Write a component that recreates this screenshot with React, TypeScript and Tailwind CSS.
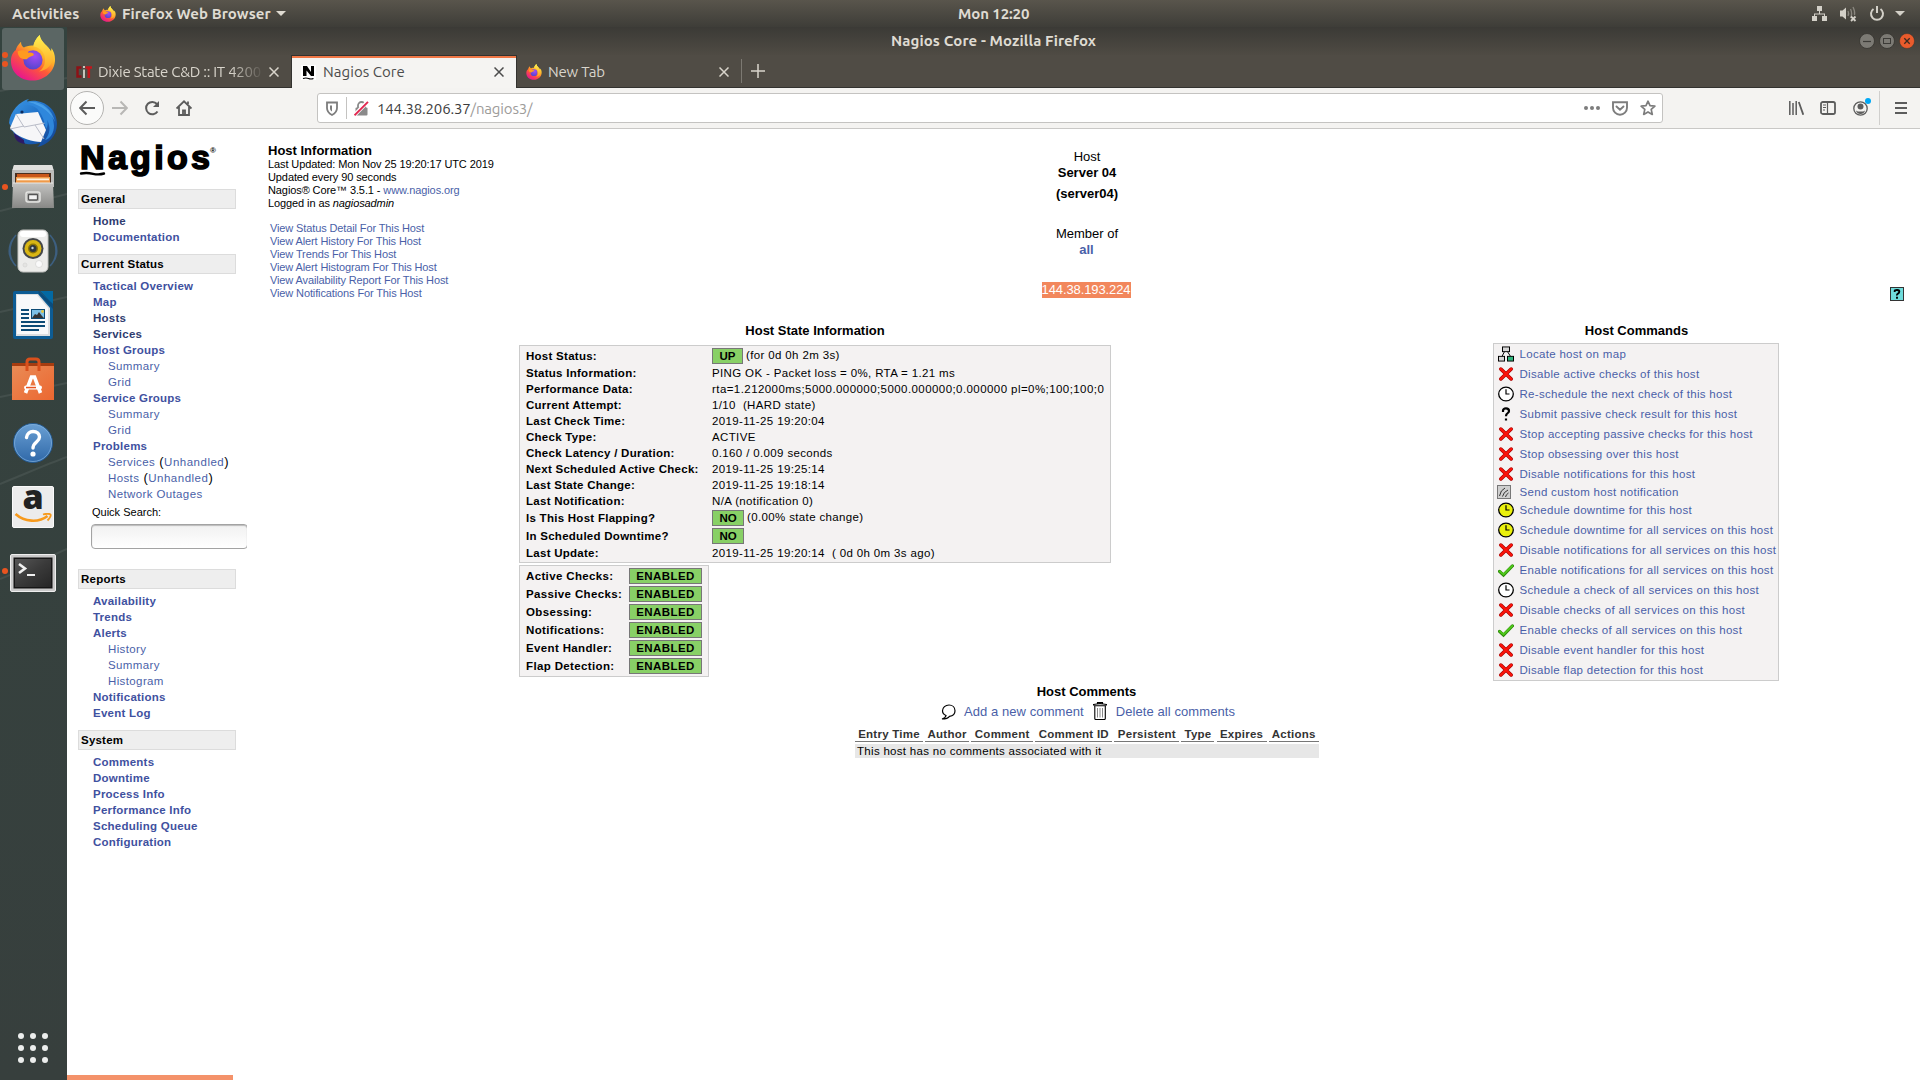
import React from "react";

const UI = "font-['Ubuntu','Noto_Sans',sans-serif]";

function FirefoxLogo({ size, id }: { size: number; id: string }) {
  return (
    <svg width={size} height={size} viewBox="0 0 48 48">
      <defs>
        <linearGradient id={id + "a"} x1="0.8" y1="0.1" x2="0.25" y2="0.95">
          <stop offset="0" stopColor="#fff14a" />
          <stop offset="0.35" stopColor="#ffb028" />
          <stop offset="0.6" stopColor="#ff5a36" />
          <stop offset="1" stopColor="#e8188c" />
        </linearGradient>
        <radialGradient id={id + "b"} cx="0.6" cy="0.3" r="0.8">
          <stop offset="0" stopColor="#a44bf5" />
          <stop offset="1" stopColor="#4a45c8" />
        </radialGradient>
        <linearGradient id={id + "c"} x1="0.6" y1="0" x2="0.6" y2="1">
          <stop offset="0" stopColor="#fff250" />
          <stop offset="1" stopColor="#ffa024" />
        </linearGradient>
      </defs>
      <path d="M31 0c-4 4-6 8-6.500 11-4-.5-8 .8-10 2-2-1-3-3-3-6-3 3-5 6-5.500 9C2.500 18 1 23 1 27c0 12 10 20.500 22.500 20.500S47 38 47 25.500c0-5-1.500-9-4-12 .3 1.500.2 3 0 4C40 11 32 8 31 0z" fill={`url(#${id}a)`} />
      <path d="M31 0c-4 4-6.500 8-6.500 12 8 1 13 8 12 16-.6 5-3 8-6 10 8-1 14-7 14.500-15 .2-3-.5-6-2-8.500.3 1.500.2 2.500 0 3.500C40 11 32 8 31 0z" fill={`url(#${id}c)`} />
      <circle cx="24" cy="26" r="10" fill={`url(#${id}b)`} />
      <path d="M8 17c4-2 9-1.500 11.500 1.500 3-.5 5 .5 5.500 2-2 2-6 2-7 4.500-2 1-4 0-7-1-2-2-3-4-3-7z" fill="#ff9a1f" />
    </svg>
  );
}

const dockIcons: { el: React.ReactNode; dots: number }[] = [
  { dots: 2, el: <FirefoxLogo size={46} id="ffd" /> },
  {
    dots: 0,
    el: (
      <svg width="50" height="50" viewBox="0 0 50 50">
        <defs>
          <linearGradient id="tb" x1="0" y1="0" x2="1" y2="1">
            <stop offset="0" stopColor="#3f9be8" />
            <stop offset="0.5" stopColor="#1d6cc4" />
            <stop offset="1" stopColor="#123f8c" />
          </linearGradient>
        </defs>
        <path d="M1 25C2 13 12 3 21 1c-1 1-2 1.500-2 2.500C34 0 49 10 49 26c0 12-9 21-20 23 2-1 3-3 3-4-10 3-22 1-26-8 0-3-1-4-3-5 1-2-1-5-2-7z" fill="url(#tb)" />
        <path d="M6 35c0 6 4 10 11 11-1-2-1-3-1-4z" fill="#2c1a66" />
        <path d="M2 30l6-14 22-2 8 18-5 12c-9 0-19-4-25-8z" fill="#f6f6f8" />
        <path d="M8 16l8 13 21-4M2 31l14-3M36 41l-9-14" fill="none" stroke="#b9bcc8" strokeWidth="1" />
        <path d="M8 16c1-6 7-10 13-9 8 1 14 8 17 24 2-3 2-6 1-9 4 7 3 14-2 20 5-1 9-7 9-14 0-14-11-23-24-23C15 5 9 10 8 16z" fill="#2f87dc" />
        <path d="M20 4c12-2 24 6 27 20-4-9-13-17-27-20z" fill="#5bb4f5" opacity="0.6" />
        <circle cx="14" cy="14" r="1.600" fill="#0c2b5e" />
      </svg>
    ),
  },
  {
    dots: 1,
    el: (
      <svg width="44" height="46" viewBox="0 0 44 46">
        <defs>
          <linearGradient id="fl" x1="0" y1="0" x2="0" y2="1">
            <stop offset="0" stopColor="#c3c3c1" />
            <stop offset="1" stopColor="#888886" />
          </linearGradient>
        </defs>
        <path d="M3 1h38l2 6v16H1V7z" fill="#bdbdbb" />
        <path d="M3 1h38l1.500 5h-41z" fill="#e0e0de" />
        <rect x="4" y="9" width="36" height="14" fill="#4a2f20" />
        <rect x="6" y="10" width="32" height="10" fill="#c9571a" />
        <rect x="5" y="13" width="34" height="9" fill="#f09a49" />
        <rect x="6" y="14.500" width="32" height="1.800" fill="#fff3e0" />
        <path d="M2 19h40l1 25H1z" fill="url(#fl)" />
        <path d="M2 19h40" stroke="#e8e8e6" strokeWidth="1" />
        <rect x="15" y="28" width="14" height="10" rx="2" fill="#b5b5b3" stroke="#e3e3e1" strokeWidth="1.500" />
        <rect x="17.500" y="30.500" width="9" height="5.500" rx="0.800" fill="#f3f3f3" stroke="#555" strokeWidth="1.300" />
      </svg>
    ),
  },
  {
    dots: 0,
    el: (
      <svg width="50" height="46" viewBox="0 0 50 46">
        <g fill="none" stroke="#3d5f80" strokeWidth="1.600">
          <path d="M8 7c-8 9-8 23 0 31M5 11c-5 7-5 17 0 23M42 7c8 9 8 23 0 31M45 11c5 7 5 17 0 23" />
        </g>
        <rect x="10" y="2" width="30" height="42" rx="5" fill="#ececea" stroke="#c2c2c0" />
        <rect x="12" y="3" width="26" height="6" rx="3" fill="#fff" />
        <circle cx="25" cy="20.500" r="10.500" fill="#44474a" />
        <circle cx="25" cy="20.500" r="8.500" fill="#d9b614" />
        <circle cx="25" cy="20.500" r="5" fill="#8c7406" />
        <circle cx="25" cy="20.500" r="3.500" fill="#30373e" />
        <circle cx="24.500" cy="20" r="1.200" fill="#c8d4dc" />
        <circle cx="31" cy="36" r="3.500" fill="#fafafa" stroke="#cfcfcd" strokeWidth="0.600" />
        <circle cx="17" cy="37" r="2" fill="#e4e4e2" stroke="#d2d2d0" strokeWidth="0.600" />
      </svg>
    ),
  },
  {
    dots: 0,
    el: (
      <svg width="40" height="48" viewBox="0 0 40 48">
        <path d="M2 0h24l14 12v34a2 2 0 0 1-2 2H2a2 2 0 0 1-2-2V2a2 2 0 0 1 2-2z" fill="#0d5c94" />
        <path d="M27 0h13v13z" fill="#0369a3" />
        <path d="M3 3h22l12 14v28H3z" fill="#dcdee0" />
        <path d="M4 4h20l11 13v26H4z" fill="#f8f9fa" />
        <path d="M25 0l15 13v5L26 3z" fill="#0a4c7c" />
        <g fill="#0c4a75">
          <rect x="8" y="18" width="8" height="2" /><rect x="8" y="22" width="8" height="2" /><rect x="8" y="26" width="8" height="2" />
          <rect x="8" y="30" width="24" height="2" /><rect x="8" y="34" width="24" height="2" /><rect x="8" y="38" width="18" height="2" />
        </g>
        <rect x="18.500" y="18.500" width="13" height="9" fill="#7cc0e6" stroke="#0c4a75" />
        <path d="M19 27l3-4 2 1 2-3 3 4 2 2z" fill="#333" />
        <circle cx="29.500" cy="20.500" r="1.400" fill="#e8c63c" />
      </svg>
    ),
  },
  {
    dots: 0,
    el: (
      <svg width="42" height="44" viewBox="0 0 42 44">
        <defs>
          <linearGradient id="sw" x1="0" y1="0" x2="1" y2="1">
            <stop offset="0" stopColor="#e98b56" />
            <stop offset="1" stopColor="#ec6730" />
          </linearGradient>
        </defs>
        <path d="M0 6h42v5H0z" fill="#a63c10" />
        <rect y="9" width="42" height="34" fill="url(#sw)" />
        <path d="M15 14V5c0-2 1-3 3-3h6c2 0 3 1 3 3v9" fill="none" stroke="#d9501c" strokeWidth="3" />
        <path d="M13.500 36l6-16h3l6 16" fill="none" stroke="#fff" strokeWidth="3.600" />
        <rect x="12" y="28.500" width="18" height="4" rx="2" fill="#fff" />
        <rect x="14" y="29.800" width="10" height="1.500" fill="#e95420" />
      </svg>
    ),
  },
  {
    dots: 0,
    el: (
      <svg width="42" height="42" viewBox="0 0 42 42">
        <defs>
          <linearGradient id="hp" x1="0" y1="0" x2="0" y2="1">
            <stop offset="0" stopColor="#6aa0d4" />
            <stop offset="1" stopColor="#2f68a8" />
          </linearGradient>
        </defs>
        <circle cx="21" cy="21" r="19.500" fill="url(#hp)" stroke="#24598f" strokeWidth="1" />
        <circle cx="21" cy="21" r="18.500" fill="none" stroke="#82b2de" strokeWidth="0.700" />
        <path d="M14.500 15.500c.5-4 3.500-6 6.500-6 4 0 6.500 2.300 6.500 5.600 0 5-6.500 5-6.500 11" fill="none" stroke="#fff" strokeWidth="3.400" strokeLinecap="round" />
        <circle cx="21" cy="32" r="2.600" fill="#fff" />
      </svg>
    ),
  },
  {
    dots: 0,
    el: (
      <div className="flex h-[42px] w-[42px] flex-col items-center overflow-visible rounded-[2px] border border-[#fafafa] bg-[#ececec]">
        <span className="-mt-[9px] h-[36px] font-['Open_Sans',sans-serif] text-[34px] leading-[36px] font-extrabold text-[#222]">a</span>
        <svg className="-mt-px" width="38" height="11" viewBox="0 0 38 11" fill="none" stroke="#f79a1c">
          <path d="M1.500 1c9 8 23 9 32 2" strokeWidth="2.600" />
          <path d="M29 1.500c3-1 7-1 7.500 0s-1 4-3 6" strokeWidth="1.800" />
        </svg>
      </div>
    ),
  },
  {
    dots: 1,
    el: (
      <svg className="mt-[3px]" width="46" height="38" viewBox="0 0 46 38">
        <defs>
          <linearGradient id="tm" x1="0" y1="0" x2="1" y2="1">
            <stop offset="0" stopColor="#555" />
            <stop offset="0.500" stopColor="#3a3a3a" />
            <stop offset="1" stopColor="#262626" />
          </linearGradient>
        </defs>
        <rect x="0.500" y="0.500" width="45" height="37" rx="1.500" fill="#c9c9c9" stroke="#eee" />
        <rect x="3.500" y="3.500" width="39" height="31" fill="#161616" />
        <rect x="5" y="5" width="36" height="28" fill="url(#tm)" />
        <path d="M9 10l6 4.500L9 19" fill="none" stroke="#f0f0f0" strokeWidth="2.600" />
        <rect x="17" y="20" width="8" height="2" fill="#f0f0f0" />
      </svg>
    ),
  },
];

function Dock() {
  return (
    <div className="relative flex h-full w-[67px] shrink-0 flex-col bg-linear-to-b from-[#34433f] to-[#373f3d]">
      <svg className="absolute inset-0" width="67" height="1053" fill="none" stroke="#4a5552" strokeWidth="2" opacity="0.7">
        <path d="M0 64l67-13M0 184l67-17M0 285l67-15M0 370l67-14M0 457c25-10 45-19 67-27M0 552c25-10 45-20 67-30" />
      </svg>
      {dockIcons.map((d, i) => (
        <div key={i} className="relative flex h-16 w-[66px] items-center justify-center">
          {d.dots === 2 && <div className="absolute top-px left-[2px] h-[62px] w-[62px] rounded-[3px] bg-[#5b6664]" />}
          {d.dots > 0 && (
            <div className="absolute left-[2px] flex flex-col gap-[3px]">
              {Array.from({ length: d.dots }, (_, k) => (
                <span key={k} className="h-[6px] w-[6px] rounded-full bg-[#e95420]" />
              ))}
            </div>
          )}
          <div className={d.dots === 2 ? "relative mb-[3px]" : "relative"}>{d.el}</div>
        </div>
      ))}
      <div className="mt-auto mb-[17px] ml-[18px] grid w-[30px] grid-cols-3 gap-[6px]">
        {Array.from({ length: 9 }, (_, k) => (
          <span key={k} className="h-[6px] w-[6px] rounded-full bg-[#eceeed]" />
        ))}
      </div>
    </div>
  );
}

function TopBar() {
  return (
    <div className={`flex h-[27px] shrink-0 items-center bg-linear-to-b from-[#59554c] to-[#3e3d38] text-[15px] leading-[22px] font-semibold text-[#dfdbd2] ${UI}`}>
      <div className="flex w-[900px] items-center">
        <span className="ml-3 w-[88px] tracking-[0.05px]">Activities</span>
        <FirefoxLogo size={16} id="fft" />
        <span className="ml-[6px] tracking-[0.08px] whitespace-nowrap">Firefox Web Browser</span>
        <svg className="ml-[5px]" width="10" height="5"><path d="M0 0h10L5 5z" fill="#dfdbd2" /></svg>
      </div>
      <div className="w-[188px] pl-[58px] tracking-[-0.1px] whitespace-nowrap">Mon 12:20</div>
      <div className="ml-auto flex h-full items-center pr-[15px] text-[#d3d0c8]">
        <svg width="15" height="15" viewBox="0 0 15 15" fill="currentColor"><path d="M5 0h5v5H8v2.500h5V10h2v5h-5v-5h2V8.500H3V10h2v5H0v-5h2V7.500h5V5H5z" /></svg>
        <svg className="ml-3" width="18" height="16" viewBox="0 0 18 16" fill="currentColor">
          <path d="M1 4.500h2.500L7 1.500v12l-3.500-3H1z" />
          <path d="M9 5c1 2 1 3 0 5M11.500 3c1.500 3 1.500 6 0 9M14 1c1.500 3 2 6 1.500 8" fill="none" stroke="#8a877f" strokeWidth="1.300" />
          <path d="M12 10.500l4.500 4.500M16.500 10.500L12 15" stroke="currentColor" strokeWidth="1.800" />
        </svg>
        <svg className="ml-[12px]" width="16" height="16" viewBox="0 0 16 16" fill="none" stroke="currentColor" strokeWidth="2"><path d="M4.500 3a6 6 0 1 0 7 0M8 0v7" /></svg>
        <svg className="ml-[10px]" width="10" height="5"><path d="M0 0h10L5 5z" fill="currentColor" /></svg>
      </div>
    </div>
  );
}

function CloseX({ className = "" }: { className?: string }) {
  return (
    <svg className={"shrink-0 " + className} width="10" height="10" viewBox="0 0 10 10" stroke="currentColor" strokeWidth="1.500"><path d="M0.500 0.500l9 9M9.500 0.500l-9 9" /></svg>
  );
}

function TitleBar() {
  return (
    <div className={`flex h-[28px] shrink-0 items-center bg-linear-to-b from-[#3b3a36] to-[#4f4b44] ${UI}`}>
      <div className="ml-[824px] text-[15px] leading-[22px] font-bold tracking-[0.1px] whitespace-nowrap text-[#dfdbd2]">Nagios Core - Mozilla Firefox</div>
      <div className="ml-auto flex gap-1 pr-[5px]">
        <svg width="16" height="16"><circle cx="8" cy="8" r="7.500" fill="#7c7a74" stroke="#35342f" strokeWidth="0.800" /><path d="M4 8.500h8" stroke="#3c3b37" strokeWidth="1.200" /></svg>
        <svg width="16" height="16"><circle cx="8" cy="8" r="7.500" fill="#7c7a74" stroke="#35342f" strokeWidth="0.800" /><rect x="4.500" y="5.500" width="7" height="5" fill="none" stroke="#3c3b37" /></svg>
        <svg width="16" height="16"><circle cx="8" cy="8" r="7.500" fill="#ea5b2c" stroke="#35342f" strokeWidth="0.500" /><path d="M5.300 5.300l5.400 5.400M10.700 5.300l-5.400 5.400" stroke="#3c2a20" strokeWidth="1.300" /></svg>
      </div>
    </div>
  );
}

function TabBar() {
  return (
    <div className={`flex h-[33px] shrink-0 bg-[#504c45] text-[15px] leading-[22px] text-[#d9d5cc] ${UI}`}>
      <div className="flex w-[224px] items-center border-b border-[#33322f] pt-px pl-[9px]">
        <svg width="16" height="12" viewBox="0 0 16 12" fill="none">
          <path d="M5.500 1.500H1.500v9h4" stroke="#8e1116" strokeWidth="2.400" />
          <path d="M8 0v2M8 3.500V12" stroke="#c9c5bc" strokeWidth="2" />
          <path d="M9.500 1.500H16M12.800 1v11" stroke="#c4161c" strokeWidth="2.600" />
        </svg>
        <span className="ml-[6px] w-[166px] overflow-hidden mask-r-from-80% tracking-[-0.25px] whitespace-nowrap">Dixie State C&amp;D :: IT 4200</span>
        <CloseX className="ml-[5px]" />
      </div>
      <div className="flex w-[226px] items-center border-x border-t border-[#33322f] bg-[#f5f4f2] text-[#4c4c4c] shadow-[inset_0_2px_0_#f07746]">
        <div className="ml-[9px] h-[15px] w-[15px] bg-white">
          <svg width="15" height="15" viewBox="0 0 15 15"><path d="M2 1h4l4 6V1h3v10h-3L5.500 5.500V11H2z" fill="#000" /><path d="M2 13.500q3-1 5.500 0t5 0" fill="none" stroke="#000" strokeWidth="1.200" /></svg>
        </div>
        <span className="ml-[7px] tracking-[0.05px] whitespace-nowrap">Nagios Core</span>
        <CloseX className="mr-[12px] ml-auto" />
      </div>
      <div className="flex w-[225px] items-center border-b border-[#33322f] pt-px pl-[9px]">
        <FirefoxLogo size={16} id="ffn" />
        <span className="ml-[6px] tracking-[-0.2px] whitespace-nowrap">New Tab</span>
        <CloseX className="mr-[13px] ml-auto" />
      </div>
      <div className="flex flex-1 items-center border-b border-[#33322f]">
        <span className="-ml-px h-6 w-px bg-[#7c7972]" />
        <svg className="ml-[9px]" width="14" height="14" stroke="#d9d5cc" strokeWidth="1.500"><path d="M7 0v14M0 7h14" /></svg>
      </div>
    </div>
  );
}

function Toolbar() {
  return (
    <div className={`flex h-[41px] shrink-0 items-center border-b border-[#c9c8c6] bg-[#f4f3f1] text-[#5c5c5c] ${UI}`}>
      <div className="ml-[3px] flex h-[34px] w-[34px] items-center justify-center rounded-full border border-[#b4b3b1] bg-[#fbfbfa]">
        <svg width="16" height="16" viewBox="0 0 16 16" fill="none" stroke="currentColor" strokeWidth="2"><path d="M1 8h15M7.500 1.500L1.200 8l6.300 6.500" /></svg>
      </div>
      <svg className="ml-2" width="16" height="16" viewBox="0 0 16 16" fill="none" stroke="#b8b7b5" strokeWidth="2"><path d="M0 8h15M8.500 1.500L14.800 8l-6.300 6.500" /></svg>
      <svg className="ml-[16px]" width="16" height="16" viewBox="0 0 16 16" fill="none" stroke="currentColor" strokeWidth="2"><path d="M13.500 11.500a6.200 6.200 0 1 1-.5-7.500" /><path d="M15 1v6h-6z" fill="currentColor" stroke="none" /></svg>
      <svg className="ml-4" width="16" height="16" viewBox="0 0 16 16" fill="none" stroke="currentColor" strokeWidth="1.800"><path d="M0.600 8.500L8 1.300l7.400 7.200M3 7v8h10V7M12 4V1.500" /><path d="M7 15V10.500h2V15" /></svg>
      <div className="ml-[125px] flex h-[30px] w-[1346px] items-center rounded-[3px] border border-[#c4c3c1] bg-white">
        <svg className="ml-2" width="12" height="15" viewBox="0 0 12 15" fill="none" stroke="#7d7d7d" strokeWidth="1.800"><path d="M1 1.500h10v5.500c0 3-2 5.500-5 7-3-1.500-5-4-5-7z" /><path d="M6 4.500v6c-1.600-1-2-2-2-3.500V4.500z" fill="#7d7d7d" stroke="none" /></svg>
        <span className="ml-2 h-[22px] w-px bg-[#c4c3c1]" />
        <svg className="ml-[7px]" width="15" height="15" viewBox="0 0 15 15"><rect x="1.500" y="6.500" width="12" height="8" rx="1" fill="#8a8a8a" /><path d="M4 7V4.500a3.500 3.500 0 0 1 7 0V7" fill="none" stroke="#8a8a8a" strokeWidth="1.800" /><path d="M0.500 14L13.500 0.800" stroke="#fff" strokeWidth="4" /><path d="M0.500 14.300L14 0.800" stroke="#e22850" strokeWidth="1.900" /></svg>
        <span className="mt-[2px] ml-[8px] text-[15px] tracking-[-0.16px] whitespace-nowrap text-[#3c3c3c]">144.38.206.37<span className="text-[#9d9c9a]">/nagios3/</span></span>
        <svg className="ml-auto" width="16" height="4" fill="#7d7d7d"><circle cx="2" cy="2" r="2" /><circle cx="8" cy="2" r="2" /><circle cx="14" cy="2" r="2" /></svg>
        <svg className="ml-3" width="16" height="15" viewBox="0 0 16 15" fill="none" stroke="#7d7d7d" strokeWidth="1.900"><path d="M1 1.200h14v5.500a7 7 0 0 1-14 0z" /><path d="M4.500 5.500L8 8.800l3.500-3.300" strokeLinecap="round" /></svg>
        <svg className="mr-[6px] ml-3" width="16" height="16" viewBox="0 0 16 16" fill="none" stroke="#7d7d7d" strokeWidth="1.700" strokeLinejoin="round"><path d="M8 1.200l2 4.500 4.900.5-3.700 3.200 1.100 5L8 11.900l-4.300 2.500 1.100-5L1.100 6.200 6 5.700z" /></svg>
      </div>
      <svg className="ml-[126px]" width="15" height="14" viewBox="0 0 15 14" fill="none" stroke="currentColor" strokeWidth="1.500"><path d="M0.800 0v14M4 2v12M7.200 0v14" /><path d="M9.800 1l4.500 12.800" strokeWidth="1.800" /></svg>
      <svg className="ml-4" width="16" height="14" viewBox="0 0 16 14" fill="none" stroke="currentColor"><rect x="1" y="1" width="14" height="12" rx="1.800" strokeWidth="1.800" /><path d="M7.500 1v12M3 4h3M3 6.500h3M3 9h2" strokeWidth="1.200" /></svg>
      <div className="relative ml-[17px] h-[15px] w-[15px]">
        <svg width="15" height="15" viewBox="0 0 15 15"><circle cx="7.500" cy="7.500" r="6.700" fill="none" stroke="currentColor" strokeWidth="1.300" /><circle cx="7.500" cy="5.600" r="3" fill="currentColor" /><path d="M3 9.500c1 1 2.500 1 4.500 1s3.500 0 4.500-1c-.5 2-2 3.500-4.500 3.500S3.500 11.500 3 9.500z" fill="currentColor" /></svg>
        <span className="absolute -top-[3px] left-[12px] h-[6px] w-[6px] rounded-full bg-[#00a8f5]" />
      </div>
      <span className="ml-[11px] h-[34px] w-px bg-[#d0cfcd]" />
      <svg className="ml-[15px]" width="12" height="12" stroke="currentColor" strokeWidth="2"><path d="M0 1h12M0 6h12M0 11h12" /></svg>
    </div>
  );
}

type Item = { t: string; sub?: boolean; dark?: boolean; un?: boolean };
const general: Item[] = [{ t: "Home", dark: true }, { t: "Documentation" }];
const current: Item[] = [
  { t: "Tactical Overview" }, { t: "Map" }, { t: "Hosts", dark: true }, { t: "Services", dark: true },
  { t: "Host Groups" }, { t: "Summary", sub: true }, { t: "Grid", sub: true },
  { t: "Service Groups" }, { t: "Summary", sub: true }, { t: "Grid", sub: true },
  { t: "Problems" }, { t: "Services", sub: true, un: true }, { t: "Hosts", sub: true, un: true }, { t: "Network Outages", sub: true },
];
const reports: Item[] = [
  { t: "Availability" }, { t: "Trends" }, { t: "Alerts" }, { t: "History", sub: true }, { t: "Summary", sub: true },
  { t: "Histogram", sub: true }, { t: "Notifications" }, { t: "Event Log" },
];
const system: Item[] = [
  { t: "Comments" }, { t: "Downtime" }, { t: "Process Info" }, { t: "Performance Info" }, { t: "Scheduling Queue" }, { t: "Configuration" },
];

function NavSection({ title, items }: { title: string; items: Item[] }) {
  return (
    <div>
      <div className="ml-[11px] h-5 w-[158px] border border-[#dcdcdc] bg-[#eeeeee] pl-[2px] text-[11.5px] leading-[18px] font-bold tracking-[0.22px] text-black">{title}</div>
      <ul className="mt-1">
        {items.map((it, i) => (
          <li key={i} className={"h-4 text-[11.5px] leading-4 whitespace-nowrap " + (it.sub ? "pl-[41px] tracking-[0.38px] text-[#4a5fa8]" : "pl-[26px] font-bold tracking-[0.23px] " + (it.dark ? "text-[#2f3c70]" : "text-[#3f51a0]"))}>
            {it.t}
            {it.un && (
              <span className="text-[13px] tracking-[0.5px] text-black">
                {" ("}
                <span className="text-[11.5px] tracking-[0.5px] text-[#4a5fa8]">Unhandled</span>)
              </span>
            )}
          </li>
        ))}
      </ul>
    </div>
  );
}

function Sidebar() {
  return (
    <div className="w-[180px] shrink-0 overflow-hidden">
      <div className="mt-[11px] ml-[13px] h-[40px]">
        <svg className="overflow-visible" width="150" height="44" viewBox="0 0 150 44">
          <text x="0" y="29" fontFamily="Liberation Sans" fontWeight="700" fontSize="34" stroke="#000" strokeWidth="1.600" textLength="130" lengthAdjust="spacing">Nagios</text>
          <text x="130" y="13" fontFamily="Liberation Sans" fontSize="8" fontWeight="700">®</text>
          <path d="M1 33.500q6-1 12 .3t11-.3" fill="none" stroke="#000" strokeWidth="2.400" strokeLinecap="round" />
        </svg>
      </div>
      <div className="mt-[9px] flex flex-col gap-[9px]">
        <NavSection title="General" items={general} />
        <div>
          <NavSection title="Current Status" items={current} />
          <div className="mt-[2px] ml-[25px] h-4 text-[11px] leading-4 text-black">Quick Search:</div>
          <div className="mt-1 ml-[24px] h-[25px] w-[157px] rounded-[4px] border border-[#a3a3a3] bg-linear-to-b from-[#f1f1f1] to-white shadow-[inset_0_1px_1px_#bbb]" />
        </div>
        <div className="mt-[11px]">
          <NavSection title="Reports" items={reports} />
        </div>
        <NavSection title="System" items={system} />
      </div>
    </div>
  );
}

function Badge({ children, className = "" }: { children: React.ReactNode; className?: string }) {
  return (
    <span className={"inline-block h-4 shrink-0 border border-[#777777] bg-[#88d066] text-center text-[11.5px] leading-[14px] font-bold text-black " + className}>{children}</span>
  );
}

const state: { k: string; v: string; b?: string; tall?: boolean; wide?: boolean }[] = [
  { k: "Host Status:", b: "UP", v: "(for 0d 0h 2m 3s)", tall: true },
  { k: "Status Information:", v: "PING OK - Packet loss = 0%, RTA = 1.21 ms" },
  { k: "Performance Data:", v: "rta=1.212000ms;5000.000000;5000.000000;0.000000 pl=0%;100;100;0", wide: true },
  { k: "Current Attempt:", v: "1/10\u00a0 (HARD state)" },
  { k: "Last Check Time:", v: "2019-11-25 19:20:04" },
  { k: "Check Type:", v: "ACTIVE" },
  { k: "Check Latency / Duration:", v: "0.160 / 0.009 seconds" },
  { k: "Next Scheduled Active Check:", v: "2019-11-25 19:25:14" },
  { k: "Last State Change:", v: "2019-11-25 19:18:14" },
  { k: "Last Notification:", v: "N/A (notification 0)" },
  { k: "Is This Host Flapping?", b: "NO", v: "(0.00% state change)", tall: true },
  { k: "In Scheduled Downtime?", b: "NO", v: "", tall: true },
  { k: "Last Update:", v: "2019-11-25 19:20:14\u00a0 ( 0d 0h 0m 3s ago)" },
];

const checks = ["Active Checks:", "Passive Checks:", "Obsessing:", "Notifications:", "Event Handler:", "Flap Detection:"];

const commands: [string, string][] = [
  ["map", "Locate host on map"],
  ["x", "Disable active checks of this host"],
  ["clock", "Re-schedule the next check of this host"],
  ["q", "Submit passive check result for this host"],
  ["x", "Stop accepting passive checks for this host"],
  ["x", "Stop obsessing over this host"],
  ["x", "Disable notifications for this host"],
  ["note", "Send custom host notification"],
  ["down", "Schedule downtime for this host"],
  ["down", "Schedule downtime for all services on this host"],
  ["x", "Disable notifications for all services on this host"],
  ["ok", "Enable notifications for all services on this host"],
  ["clock", "Schedule a check of all services on this host"],
  ["x", "Disable checks of all services on this host"],
  ["ok", "Enable checks of all services on this host"],
  ["x", "Disable event handler for this host"],
  ["x", "Disable flap detection for this host"],
];

function CommandIcon({ kind }: { kind: string }) {
  if (kind === "note")
    return (
      <svg className="-ml-px" width="14" height="14" viewBox="0 0 14 14"><rect x="0.500" y="0.500" width="13" height="13" fill="#cfcfcf" stroke="#777" /><path d="M2.500 11q1-6 5.500-8M5.500 11.500q1-4.500 5.500-6.500M8.500 12q.5-2.500 3-4" fill="none" stroke="#333" strokeWidth="1" /></svg>
    );
  return (
    <svg width="16" height="16" viewBox="0 0 16 17" preserveAspectRatio="none">
      {kind === "map" && (
        <g stroke="#000" strokeWidth="1">
          <path d="M6.500 6L4 11M9.500 6l3 5" />
          <rect x="4.500" y="1" width="7" height="5" fill="#d6d6d6" />
          <rect x="0.500" y="11" width="6" height="5" fill="#d6d6d6" />
          <rect x="9.500" y="11" width="6" height="5" fill="#2fb57d" />
        </g>
      )}
      {kind === "x" && (
        <g strokeLinecap="round">
          <path d="M2.800 3.200l10.400 10.600M13.200 3.200L2.800 13.800" stroke="#a80000" strokeWidth="3.600" />
          <path d="M2.800 3.200l10.400 10.600M13.200 3.200L2.800 13.800" stroke="#fb140a" strokeWidth="2.400" />
        </g>
      )}
      {(kind === "clock" || kind === "down") && (
        <g stroke="#000">
          <circle cx="8" cy="8.500" r="7.300" fill={kind === "down" ? "#eaf00c" : "#fff"} strokeWidth="1.300" />
          <path d="M8 3.500v5h3.500" fill="none" strokeWidth="1.200" />
        </g>
      )}
      {kind === "q" && <path d="M5 6.500V5q0-2.500 3-2.500t3 2.700q0 1.500-1.500 2.500T8 11M8 13.200v2.300" fill="none" stroke="#000" strokeWidth="2.200" />}
      {kind === "ok" && (
        <g fill="none">
          <path d="M1.500 10l4 3.800L14.500 4" stroke="#2c8a08" strokeWidth="3.200" strokeLinecap="round" />
          <path d="M1.800 10l3.700 3.200L14.300 4" stroke="#4fc81a" strokeWidth="1.900" strokeLinecap="round" />
        </g>
      )}
    </svg>
  );
}

const LINK = "text-[#4a5fa8]";

function Main() {
  return (
    <div className="flex min-w-0 flex-1 flex-col pl-[21px] text-black">
      <div className="grid w-[1638px] grid-cols-3">
        <div className="mt-[14px] text-[11px] leading-[13px] tracking-[-0.1px]">
          <div className="h-[15px] text-[13px] leading-[15px] font-bold tracking-normal">Host Information</div>
          <div>Last Updated: Mon Nov 25 19:20:17 UTC 2019</div>
          <div>Updated every 90 seconds</div>
          <div>Nagios® Core™ 3.5.1 - <span className={LINK}>www.nagios.org</span></div>
          <div>Logged in as <i>nagiosadmin</i></div>
          <div className={"mt-3 pl-[2px] tracking-[-0.12px] " + LINK}>
            <div>View Status Detail For This Host</div>
            <div>View Alert History For This Host</div>
            <div>View Trends For This Host</div>
            <div>View Alert Histogram For This Host</div>
            <div>View Availability Report For This Host</div>
            <div>View Notifications For This Host</div>
          </div>
        </div>
        <div className="mt-[20px] flex flex-col items-center text-[13px] leading-4">
          <div>Host</div>
          <div className="font-bold">Server 04</div>
          <div className="mt-[5px] font-bold">(server04)</div>
          <div className="mt-6">Member of</div>
          <div className={"mr-px font-bold " + LINK}>all</div>
          <div className="mt-6 mr-[2px] h-4 w-[89px] bg-[#f2875c] tracking-[-0.1px] whitespace-nowrap text-white">144.38.193.224</div>
        </div>
        <div className="flex items-end justify-end pr-[2px]">
          <svg className="-mb-px" width="14" height="14" viewBox="0 0 14 14"><rect x="0.500" y="0.500" width="13" height="13" fill="#6fdcdc" stroke="#333" /><path d="M4.700 5V4q0-1 2.300-1t2.300 1.500Q9.300 6 8 6.700T7 8.500M7 9.800v2" fill="none" stroke="#000" strokeWidth="1.900" /></svg>
        </div>
      </div>

      <div className="mt-[23px] flex h-[360px]">
        <div className="flex w-[1094px] flex-col items-center">
          <div className="h-4 text-[13px] leading-4 font-bold">Host State Information</div>
          <div className="mt-[6px] w-[592px]">
            <div className="h-[218px] border border-[#cccccc] bg-[#f4f2f2] p-px text-[11.5px]">
              {state.map((r) => (
                <div key={r.k} className={"flex items-center pl-[5px] leading-[14px] whitespace-nowrap " + (r.tall ? "h-[18px]" : "h-4")}>
                  <div className="w-[186px] shrink-0 font-bold tracking-[0.27px]">{r.k}</div>
                  {r.b && <Badge className={r.b === "UP" ? "mr-[3px] w-[31px]" : "mr-[3px] w-[32px]"}>{r.b}</Badge>}
                  <div className={(r.wide ? "tracking-[0.43px]" : "tracking-[0.36px]") + (r.b ? " pb-[2px]" : "")}>{r.v}</div>
                </div>
              ))}
            </div>
            <div className="mt-[2px] h-[112px] w-[190px] border border-[#cccccc] bg-[#f4f2f2] p-px text-[11.5px] leading-[14px]">
              {checks.map((c) => (
                <div key={c} className="flex h-[18px] items-center pl-[5px] font-bold">
                  <div className="w-[103px] tracking-[0.36px]">{c}</div>
                  <Badge className="w-[73px] tracking-[0.45px]">ENABLED</Badge>
                </div>
              ))}
            </div>
          </div>
        </div>
        <div className="flex w-[548px] flex-col items-center">
          <div className="ml-px h-4 text-[13px] leading-4 font-bold">Host Commands</div>
          <div className="mt-1 mr-px w-[286px] border border-[#cccccc] bg-[#f4f2f2]">
            {commands.map(([k, t]) => (
              <div key={t} className={"flex items-center pl-1 " + (k === "note" ? "h-4" : "h-5")}>
                <div className="w-[22px]"><CommandIcon kind={k} /></div>
                <div className={"text-[11.5px] leading-[14px] tracking-[0.31px] whitespace-nowrap " + LINK}>{t}</div>
              </div>
            ))}
          </div>
        </div>
      </div>

      <div className="flex w-[1638px] flex-col items-center pt-px">
        <div className="mr-px h-4 text-[13px] leading-4 font-bold">Host Comments</div>
        <div className={"mt-[2px] ml-[2px] flex h-5 items-center text-[13px] tracking-[0.08px] " + LINK}>
          <svg className="mr-[8px]" width="15" height="16" viewBox="0 0 15 16" fill="#fff" stroke="#000" strokeWidth="1.200"><path d="M5 11.500C2.500 10.500 1.500 9 1.500 6.800 1.500 3.500 4.500 1 8 1s6 2.500 6 5.800c0 3-2.300 5.200-5.500 5.500-1 1.500-3.500 2.700-7.500 2.700 2.500-.8 3.800-1.800 4-3.500z" /></svg>
          <span>Add a new comment</span>
          <svg className="mx-[9px] -mt-[2px]" width="14" height="18" viewBox="0 0 14 18" fill="none" stroke="#000" strokeWidth="1.100"><path d="M0.500 3.500V2.500q6.500-1.500 13 0v1M4.500 1.800V0.600h5v1.200M1.800 3.500v13q0 1 1 1h8.500q1 0 1-1v-13M1 3.800h12" /><path d="M4.500 6v9.500M7 6v9.500M9.500 6v9.500" stroke="#888" strokeWidth="1" /></svg>
          <span>Delete all comments</span>
        </div>
        <div className="mt-[4px] w-[464px] text-[11.5px]">
          <div className="grid grid-cols-[68px_44px_62px_77px_65px_33px_50px_50px] gap-x-[2.100px] text-center font-bold tracking-[0.25px] whitespace-nowrap text-[#333]">
            {["Entry Time", "Author", "Comment", "Comment ID", "Persistent", "Type", "Expires", "Actions"].map((h) => (
              <div key={h} className="flex h-4 justify-center border-b border-[#777] leading-[16px]">{h}</div>
            ))}
          </div>
          <div className="mt-[2px] h-[14px] bg-[#e7e7e7] pl-[2px] leading-[14px] tracking-[0.3px]">This host has no comments associated with it</div>
        </div>
      </div>
    </div>
  );
}

export default function App() {
  return (
    <div className="flex h-[1080px] w-[1920px] flex-col overflow-hidden bg-white">
      <TopBar />
      <div className="flex min-h-0 flex-1">
        <Dock />
        <div className="relative flex min-w-0 flex-1 flex-col">
          <TitleBar />
          <TabBar />
          <Toolbar />
          <div className="flex flex-1 bg-white font-['Liberation_Sans',Arial,sans-serif]">
            <Sidebar />
            <Main />
          </div>
          <div className="absolute bottom-0 left-0 h-[5px] w-[166px] bg-[#f4926a]" />
        </div>
      </div>
    </div>
  );
}
